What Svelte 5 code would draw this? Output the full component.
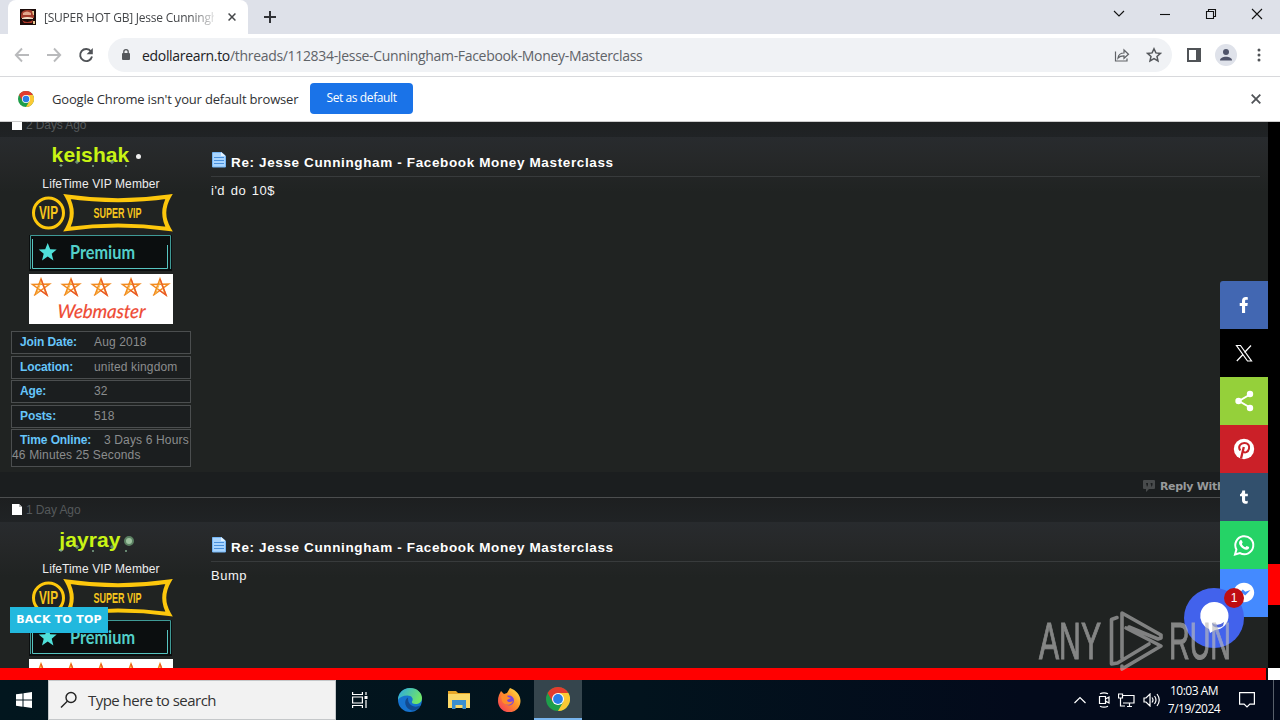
<script lang="ts">
  // Forum thread inside a browser window, with the desktop taskbar below

  const threadTitle = 'Re: Jesse Cunningham - Facebook Money Masterclass';

  let posts = $state([
    {
      date: '2 Days Ago',
      user: 'keishak',
      online: false,
      text: "i'd do 10$",
      stats: [
        { label: 'Join Date:', value: 'Aug 2018' },
        { label: 'Location:', value: 'united kingdom' },
        { label: 'Age:', value: '32' },
        { label: 'Posts:', value: '518' },
        { label: 'Time Online:', value: '3 Days 6 Hours 46 Minutes 25 Seconds', long: true }
      ]
    },
    { date: '1 Day Ago', user: 'jayray', online: true, text: 'Bump', stats: [] }
  ]);

  const shares = ['facebook', 'x', 'sharethis', 'pinterest', 'tumblr', 'whatsapp', 'messenger'];
  const starOffsets = [3, 33, 63, 93, 122];
</script>

{#snippet chromeLogo(size: number)}
  <svg width={size} height={size} viewBox="0 0 24 24">
    <circle cx="12" cy="12" r="12" fill="#1e9e4a" />
    <path d="M12 6H22.400A12 12 0 0 1 12 24L17.200 15Z" fill="#fcc934" />
    <path d="M1.600 6A12 12 0 0 1 22.400 6H12L6.800 15Z" fill="#e33b2e" />
    <circle cx="12" cy="12" r="6" fill="#fff" />
    <circle cx="12" cy="12" r="4.900" fill="#2a7de8" />
  </svg>
{/snippet}

{#snippet cross(size: number, stroke: number)}
  <svg width={size} height={size} viewBox="0 0 10 10" fill="none" stroke="currentColor" stroke-width={stroke}>
    <path d="M.7.7 9.3 9.3M9.3.7.7 9.3" />
  </svg>
{/snippet}

{#snippet badges()}
  <svg class="badges" width="144" height="130" viewBox="0 0 144 130">
    <g fill="none" stroke="#fdc70c">
      <circle cx="19.5" cy="19" r="15" stroke-width="3" />
      <path d="M38 2.500Q89 10 140 2.500 130.500 19 140 35 89 28 38 35 47.500 19 38 2.500Z" stroke-width="4" />
    </g>
    <g fill="#f6c61d" font-family="'Liberation Sans', sans-serif" font-weight="700">
      <text x="10" y="25" font-size="17.500" textLength="19" lengthAdjust="spacingAndGlyphs">VIP</text>
      <text x="64.500" y="23.500" font-size="14.500" textLength="48" lengthAdjust="spacingAndGlyphs">SUPER VIP</text>
    </g>
    <rect x="0" y="41" width="143" height="36" fill="#0b0e0f" />
    <path d="M1.500 75V41.500H141.500V75" fill="none" stroke="#3f9a96" />
    <path d="M3.500 45V74.500H138.500V51" fill="none" stroke="#57c4c0" />
    <path d="m18.700 49 2.500 6.200 6.500.3-5 4.200 1.700 6.800-5.700-3.900-5.700 3.900 1.700-6.800-5-4.200 6.500-.3Z" fill="#4fe0da" />
    <text x="41" y="64.500" font-size="19" font-family="Lato, sans-serif" font-weight="700" fill="#53cfc9" textLength="65" lengthAdjust="spacingAndGlyphs">Premium</text>
    <rect y="80" width="144" height="50" fill="#fff" />
    {#each starOffsets as x}
      <g transform="translate({x} 84)" fill="none" stroke="#f28a1e" stroke-width="1.500">
        <path d="M3 17 9 1 15 17 .5 6.500 17.500 6 2 17.500" />
        <path d="M4.500 16 9.500 3 13.500 15.500" stroke="#f6b23c" stroke-width="1" />
        <path d="M9 1 15 17 8 12" stroke="#e9562a" stroke-width="1.200" />
      </g>
    {/each}
    <g transform="translate(28 124) skewX(-4)">
      <text font-size="19" font-family="Lato, sans-serif" font-style="italic" fill="#ee4a33" stroke="#ee4a33" stroke-width=".2" textLength="88" lengthAdjust="spacingAndGlyphs">Webmaster</text>
    </g>
  </svg>
{/snippet}

{#snippet shareIcon(name: string)}
  <svg width="24" height="24" viewBox="0 0 24 24" fill="#fff">
    {#if name === 'facebook'}
      <path d="M10 20v-7H7.700v-3H10V8c0-2.700 1.400-4 3.800-4 .9 0 1.600.1 2 .2v2.600h-1.400c-1 0-1.300.5-1.300 1.400V10h2.700l-.4 3h-2.300v7Z" />
    {:else if name === 'x'}
      <path d="M4.500 4.500h4l11 15.500h-4ZM19 4.500l-6.500 7M11 13.500 4.800 20" fill="none" stroke="#fff" stroke-width="1.200" />
    {:else if name === 'sharethis'}
      <path d="m18 5.500-11 6.500 11 6.500" fill="none" stroke="#fff" stroke-width="2" />
      <circle cx="18" cy="5" r="3.200" /><circle cx="6.500" cy="12" r="3.200" /><circle cx="18" cy="19" r="3.200" />
    {:else if name === 'pinterest'}
      <circle cx="12" cy="12" r="10.200" />
      <path d="M9 21.500 11.800 10" fill="none" stroke="#c92228" stroke-width="2.300" />
      <path d="M8.300 13.500C5.500 9.500 8.500 6 12.300 6c3.700 0 5.500 2.500 4.700 5.800-.7 3.300-4.300 4.700-6.100 2.500" fill="none" stroke="#c92228" stroke-width="2" />
    {:else if name === 'tumblr'}
      <path d="M10.300 5.500h2.800v3.200h2.700v2.500h-2.700V15c0 1.300 1.100 1.500 2.600.8v2.400c-3.100 1.200-5.700.3-5.700-2.900v-4.100H8V9.200c1.500-.6 2.200-1.800 2.300-3.700Z" />
    {:else if name === 'whatsapp'}
      <path d="m3 21.500 1.400-5A9 9 0 1 1 8 20.100Z" fill="none" stroke="#fff" stroke-width="2" />
      <path d="M8.300 7.300c.6-.6 1.200-.5 1.500.2l.8 1.800c.2.500-.4 1.200-.8 1.600.8 1.500 1.900 2.600 3.600 3.300l1.200-1.300 2.500 1.200c.3 1.500-1.300 2.900-2.800 2.700-3.700-.5-7.700-4.400-7.200-7.500.1-.8.600-1.500 1.200-2Z" />
    {:else}
      <path d="M12 1.800c5.800 0 10.200 4.300 10.200 9.700 0 5.500-4.400 9.700-10.200 9.700-1.100 0-2-.1-3-.4L5.500 22v-3C3 17.100 1.800 14.500 1.800 11.500c0-5.400 4.400-9.700 10.200-9.700Z" />
      <path d="m5.500 14 5.300-5.500 2.500 2.300L18.500 9l-5.300 5.500-2.500-2.300Z" fill="#448aff" />
    {/if}
  </svg>
{/snippet}

<div class="screen">
  <header class="tabstrip">
    <div class="tab">
      <svg width="16" height="16" viewBox="0 0 16 16">
        <rect width="16" height="16" fill="#1c0c0a" />
        <path d="M1 6Q1 1 8 1t6 5v3H1Z" fill="#a33b2b" />
        <path d="M3 4q4-3 8 0v2H3Z" fill="#e2a68b" />
        <path d="M2 9q5-2 11 0v1H2Z" fill="#f1ddc5" />
        <path d="M2 11q5 4 11 0l-1 3H4Z" fill="#b23a2b" />
        <path d="M12 2h2v4h-1Zm1 10h2v3h-2Z" fill="#e5c48d" />
      </svg>
      <span class="tab-title">[SUPER HOT GB] Jesse Cunningham</span>
      <span class="tab-close">{@render cross(8, 1.9)}</span>
    </div>
    <svg class="new-tab" width="12" height="12" viewBox="0 0 12 12"><path d="M6 0v12M0 6h12" stroke="#303236" stroke-width="2" /></svg>
    <div class="window-buttons">
      <svg width="12" height="12" viewBox="0 0 12 12"><path d="m1 3 5 5 5-5" /></svg>
      <svg width="12" height="12" viewBox="0 0 12 12"><path d="M1 6.500h10" /></svg>
      <svg width="12" height="12" viewBox="0 0 12 12"><path d="M1.500 3.500h7v7h-7ZM3.500 3V1.500h7v7H9" /></svg>
      <svg width="12" height="12" viewBox="0 0 12 12"><path d="m1 1 10 10M11 1 1 11" /></svg>
    </div>
  </header>

  <div class="toolbar">
    <svg class="nav" width="16" height="16" viewBox="0 0 16 16"><path d="M15 8H2M8 1.500 1.800 8 8 14.500" stroke="#b9babc" /></svg>
    <svg class="nav" width="16" height="16" viewBox="0 0 16 16"><path d="M1 8h13M8 1.500 14.200 8 8 14.500" stroke="#b9babc" /></svg>
    <svg class="nav" width="16" height="16" viewBox="0 0 16 16"><path d="M13 4.500A6 6 0 1 0 14 9.500" stroke="#505357" /><path d="M14.800 1v6.200H8.600Z" fill="#505357" /></svg>
    <div class="omnibox">
      <svg width="10" height="14" viewBox="0 0 10 14"><rect x="1" y="5" width="8" height="7" rx="1" fill="#55585c" /><path d="M2.800 5.500V3.800a2.200 2.200 0 0 1 4.400 0v1.700" fill="none" stroke="#55585c" stroke-width="1.300" /></svg>
      <span class="url"><b>edollarearn.to</b>/threads/112834-Jesse-Cunningham-Facebook-Money-Masterclass</span>
      <svg class="share" width="16" height="16" viewBox="0 0 16 16"><path d="M1.500 4.500v9.500h11.500v-2.500M4 11c.5-3.500 2.500-5 6-5V3l4.500 4.300L10 11.300V8.800C7.500 8.800 5.500 9.300 4 11Z" fill="none" stroke="#606367" stroke-width="1.200" /></svg>
      <svg width="16" height="16" viewBox="0 0 16 16"><path d="m8 1.800 1.900 4.100 4.500.5-3.400 3 1 4.500-4-2.300-4 2.300 1-4.500-3.400-3 4.500-.5Z" fill="none" stroke="#55585c" stroke-width="1.500" /></svg>
    </div>
    <svg class="panel" width="14" height="14" viewBox="0 0 14 14"><path d="M0 0h14v14H0Zm2 2v10h7V2Z" fill="#505357" fill-rule="evenodd" /></svg>
    <svg class="avatar" width="22" height="22" viewBox="0 0 22 22"><circle cx="11" cy="11" r="11" fill="#dfe2ea" /><circle cx="11" cy="8" r="3" fill="#50546a" /><path d="M5 16.500c0-5 12-5 12 0Z" fill="#50546a" /></svg>
    <svg width="4" height="14" viewBox="0 0 4 14" fill="#505357"><circle cx="2" cy="2" r="1.500" /><circle cx="2" cy="7" r="1.500" /><circle cx="2" cy="12" r="1.500" /></svg>
  </div>

  <div class="infobar">
    {@render chromeLogo(16)}
    <span class="infobar-text">Google Chrome isn't your default browser</span>
    <button class="default-button">Set as default</button>
    <span class="infobar-close">{@render cross(10, 1.8)}</span>
  </div>

  <main class="page">
    <div class="thread">
      {#each posts as post}
        <article class="post">
          <div class="post-head">
            <svg width="10" height="12" viewBox="0 0 10 12"><path d="M0 0h7l3 3v8H0Z" fill="#fff" /><path d="M7 0v3h3" fill="#b9b9b9" /></svg>
            {post.date}
          </div>
          <div class="post-body">
            <aside class="user">
              <div class="username">
                <span class="name">{post.user}</span>
                <span class="status" class:online={post.online}></span>
                <svg class="sparkles" width="78" height="8" viewBox="0 0 78 8" stroke="#7fa88a" stroke-width="1"><path d="M8 4v3M6.500 5.500h3M24 0v4M22 2h4M40 5v2M39 6h2M59 0v4M57 2h4M73 5v2M72 6h2" /></svg>
              </div>
              <div class="rank">LifeTime VIP Member</div>
              {@render badges()}
              <div class="stats">
                {#each post.stats as stat}
                  <div class="stat" class:long={stat.long}><b>{stat.label}</b>{stat.value}</div>
                {/each}
              </div>
            </aside>
            <section class="message">
              <h2>
                <svg width="16" height="18" viewBox="0 0 16 18"><path d="M1.500 1.500h9l4 3.500v11h-13Z" fill="#a9d5ff" stroke="#75b6f5" /><path d="M3 6.500h10M3 9.500h10M3 12.500h10" stroke="#4a90dc" /><path d="M10 1v4h4.500" fill="#e4f3ff" /></svg>
                {threadTitle}
              </h2>
              <p>{post.text}</p>
            </section>
          </div>
          <div class="post-foot">
            <svg width="14" height="14" viewBox="0 0 14 14"><path d="M2 1h10q1 0 1 1v7q0 1-1 1H7l-3 3v-3H2q-1 0-1-1V2q0-1 1-1Z" fill="#484b4c" /><path d="M4 4h2v2L5 8M8.500 4h2v2l-1 2" fill="#1b1e1f" /></svg>
            Reply With Quote
          </div>
        </article>
      {/each}
    </div>
    <div class="scroll-y"><i></i></div>
    <div class="scroll-x"></div>

    <div class="back-top">BACK TO TOP</div>
    <div class="share-bar">
      {#each shares as name}
        <div class="share-item {name}">{@render shareIcon(name)}</div>
      {/each}
    </div>
    <div class="chat">
      <svg width="32" height="34" viewBox="0 0 32 34"><path d="M16 1a14 14 0 0 1 1 28l-5 3-1-4A14 14 0 0 1 16 1Z" fill="#fff" /><path d="M14 22q6 4 12-1l-1 4q-5 3-10 0Z" fill="#4b63dd" /></svg>
      <span class="chat-count">1</span>
    </div>
    <svg class="watermark" width="196" height="64" viewBox="0 0 196 64">
      <g fill="#bbb" stroke="#bbb" stroke-width="1.100" font-family="'Liberation Sans Narrow', 'Liberation Sans', sans-serif" font-size="51">
        <text x="1" y="50" textLength="62" lengthAdjust="spacingAndGlyphs">ANY</text>
        <text x="131" y="50" textLength="62" lengthAdjust="spacingAndGlyphs">RUN</text>
      </g>
      <g fill="none" stroke="#b4b4b4" stroke-width="3.600" stroke-linejoin="round" stroke-linecap="round">
        <path d="M79 8.500 73.500 10.500v44.500l6-1L111 35M84 49V4l39 22M88 19l35 18-39 23V57M123 26v3l-3 1-29-12" />
      </g>
    </svg>
  </main>

  <footer class="taskbar">
    <div class="start">
      <svg width="16" height="16" viewBox="0 0 16 16" fill="#fff"><path d="M0 2.300 6.500 1.400v6.100H0ZM7.500 1.200 16 0v7.500H7.500ZM0 8.500h6.500v6.200L0 13.800ZM7.500 8.500H16V16l-8.500-1.200Z" /></svg>
    </div>
    <div class="search">
      <svg width="18" height="18" viewBox="0 0 18 18" fill="none" stroke="#222" stroke-width="1.400"><circle cx="11" cy="6.500" r="5" /><path d="M7.300 10.200 1 16.500" /></svg>
      Type here to search
    </div>
    <div class="task">
      <svg width="16" height="16" viewBox="0 0 16 16" fill="none" stroke="#fff" stroke-width="1.200"><path d="M.6 0v2.500H10.400V0M.6 16v-2.500H10.400V16M.6 5h9.800v6H.6ZM14 0v3M14 8v8" /><path d="M12.500 4h3v3h-3Z" fill="#fff" stroke="none" /></svg>
    </div>
    <div class="task">
      <svg width="24" height="24" viewBox="0 0 24 24">
        <defs>
          <linearGradient id="edge-top" x1="0" y1="0" x2="1" y2=".4"><stop offset="0" stop-color="#2aa7e5" /><stop offset="1" stop-color="#6fe56a" /></linearGradient>
        </defs>
        <circle cx="12" cy="12" r="12" fill="#1673cf" />
        <path d="M0 12C0 5 5 0 12 0c7.500 0 12 5 12 10 0 4-3 6-6.500 6-3 0-4-1-3.500-2.500 2-3-.5-6-4.500-6C5 7.500 1.500 9 0 12Z" fill="url(#edge-top)" />
        <path d="M10 9.500C5 12 7 21 14 22.500c4 0 7-2 8.500-5-6 3-13 0-12.500-8Z" fill="#124b91" />
      </svg>
    </div>
    <div class="task">
      <svg width="22" height="20" viewBox="0 0 22 20"><path d="M0 1h8l2 2h12v15H0Z" fill="#e8a728" /><path d="M0 4h22v14H0Z" fill="#fbd868" /><path d="M4 10h14v9h-3.500v-4h-7v4H4Z" fill="#3b8fd0" /></svg>
    </div>
    <div class="task">
      <svg width="24" height="24" viewBox="0 0 24 24">
        <defs>
          <linearGradient id="fox" x1="1" y1="0" x2="0" y2="1"><stop offset="0" stop-color="#fff04d" /><stop offset=".45" stop-color="#ff9128" /><stop offset="1" stop-color="#f5305f" /></linearGradient>
        </defs>
        <path d="M2 7 4 3l3 3 3-1 3-5c6 2 10.500 7 10.500 13A11 11 0 0 1 1 13c0-2 .2-4 1-6Z" fill="url(#fox)" />
        <circle cx="12" cy="12.500" r="5" fill="#7a46db" />
        <path d="M4 8c3-2 6-1 7 1l3 1-4 2c0 2 3 3 6 1-1 5-9 5-11 0Z" fill="#ff8a2a" />
      </svg>
    </div>
    <div class="task active">{@render chromeLogo(24)}</div>
    <div class="tray">
      <svg width="12" height="8" viewBox="0 0 12 8"><path d="m.5 7 5.500-5.500L11.500 7" /></svg>
      <svg width="12" height="16" viewBox="0 0 12 16"><path d="M1.500 4.500h6v7h-6ZM7.500 7 11 5v6L7.500 9M2 1.800q4-2 8 0M2 14.200q4 2 8 0" /></svg>
      <svg width="17" height="14" viewBox="0 0 17 14"><path d="M5 2.500h11v7.500H5M9 13.500h5M11.500 10v3M.5 1h4v4h-4ZM2.500 5v8H7" /></svg>
      <svg width="17" height="14" viewBox="0 0 17 14"><path d="M1 5h2l4-4v12L3 9H1ZM9 4.500q2 2.500 0 5M11.500 3q3 4 0 8M14 1q4.500 6 0 12" /></svg>
    </div>
    <div class="clock"><span>10:03 AM</span><span>7/19/2024</span></div>
    <svg class="notice" width="16" height="16" viewBox="0 0 16 16"><path d="M.6.6h14.800v11.500h-4.500L8 15l-2.900-2.900H.6Z" fill="none" stroke="#fff" stroke-width="1.200" /></svg>
    <i class="desktop-edge"></i>
  </footer>
</div>

<style>
  :global(body) {
    margin: 0;
    overflow: hidden;
  }

  .screen {
    width: 1280px;
    height: 720px;
    display: flex;
    flex-direction: column;
    overflow: hidden;
    font-family: 'Liberation Sans', sans-serif;
    white-space: nowrap;
  }

  svg {
    flex: none;
    display: block;
  }

  .screen > * {
    box-sizing: border-box;
    flex: none;
  }

  /* Browser chrome */
  .tabstrip {
    height: 34px;
    display: flex;
    align-items: center;
    padding-left: 8px;
    background: #dee1e9;
    font-family: 'Open Sans', 'Noto Sans', sans-serif;
  }

  .tab {
    box-sizing: border-box;
    width: 240px;
    height: 34px;
    padding: 0 12px;
    display: flex;
    align-items: center;
    background: #fff;
    border-radius: 8px 8px 0 0;
  }

  .tab-title {
    width: 170px;
    margin-left: 8px;
    overflow: hidden;
    color: #45474a;
    font-size: 12px;
    letter-spacing: -0.22px;
    mask-image: linear-gradient(90deg, #000 145px, transparent 175px);
  }

  .tab-close {
    margin-left: 14px;
    color: #45474a;
  }

  .new-tab {
    margin-left: 16px;
  }

  .window-buttons {
    display: flex;
    gap: 34px;
    margin-left: auto;
    margin-top: -6px;
    padding-right: 17px;
    fill: none;
    stroke: #111;
    stroke-width: 1.1;
  }

  .toolbar {
    height: 43px;
    display: flex;
    align-items: center;
    padding: 0 19px 0 14px;
    border-bottom: 1px solid #d8d9dc;
    background: #fff;
    font-family: 'Open Sans', 'Noto Sans', sans-serif;
  }

  .nav {
    margin-right: 16px;
    fill: none;
    stroke-width: 1.9;
  }

  .omnibox {
    box-sizing: border-box;
    width: 1064px;
    height: 34px;
    margin-left: -2px;
    padding: 0 10px 0 13px;
    display: flex;
    align-items: center;
    border-radius: 17px;
    background: #f0f2f5;
  }

  .url {
    margin-left: 11px;
    color: #5f6368;
    font-size: 14px;
    letter-spacing: -0.32px;
  }

  .url b {
    color: #202124;
    font-weight: 400;
  }

  .share {
    margin-left: auto;
    margin-right: 16px;
  }

  .panel {
    margin-left: 15px;
  }

  .avatar {
    margin: 0 auto 0 14px;
  }

  .infobar {
    height: 45px;
    display: flex;
    align-items: center;
    padding: 0 19px 0 18px;
    border-bottom: 1px solid #ccc;
    background: #fff;
    color: #303134;
    font-family: 'Open Sans', 'Noto Sans', sans-serif;
    font-size: 13px;
  }

  .infobar-text {
    width: 246px;
    margin-left: 18px;
    letter-spacing: -0.18px;
  }

  .default-button {
    width: 103px;
    height: 31px;
    margin: -1px 0 0 12px;
    padding: 0 0 2px;
    border: 0;
    border-radius: 4px;
    background: #1a73e8;
    color: #fff;
    font: 12px 'Open Sans', sans-serif;
    letter-spacing: -0.4px;
  }

  .infobar-close {
    margin-left: auto;
    color: #505357;
  }

  /* Forum page */
  .page {
    position: relative;
    height: 558px;
    display: grid;
    grid-template: 546px 12px / 1268px 12px;
    overflow: hidden;
    background: #fff;
  }

  .thread {
    height: 546px;
    overflow: hidden;
    background: #1b1e1f;
  }

  .post {
    height: 385px;
    box-sizing: border-box;
    border-top: 1px solid #4c4e4f;
  }

  .post:first-child {
    margin-top: -10px;
  }

  .post-head {
    height: 24px;
    display: flex;
    align-items: center;
    gap: 4px;
    padding-left: 12px;
    background: linear-gradient(#1d1f20, #202325);
    color: #55595b;
    font-size: 12px;
    letter-spacing: -0.1px;
  }

  .post-body {
    height: 335px;
    display: flex;
    background: linear-gradient(#282b2e, #262829 22px, #202322 55px);
  }

  .user {
    width: 180px;
    padding: 6px 10px 0 11px;
    border-left: 1px solid #181a1b;
    margin-left: -1px;
    color: #ededed;
  }

  .username {
    position: relative;
    height: 24px;
    display: flex;
    align-items: center;
    justify-content: center;
    gap: 7px;
    margin: 0 9px 0 0;
  }

  .name {
    color: #c9f414;
    font-size: 21px;
    font-weight: 700;
    letter-spacing: 0.1px;
  }

  .status {
    width: 5px;
    height: 5px;
    margin-top: 2px;
    border-radius: 50%;
    background: #eee;
  }

  .status.online {
    width: 6px;
    height: 6px;
    margin-left: -4px;
    border: 2px solid #5b8062;
    background: #9ec3a0;
  }

  .sparkles {
    position: absolute;
    left: 42px;
    bottom: -1px;
  }

  .rank {
    height: 15px;
    margin-top: 10px;
    line-height: 15px;
    text-align: center;
    font-size: 12px;
    letter-spacing: 0.1px;
  }

  .badges {
    margin: 2px 0 7px 18px;
  }

  .stat {
    box-sizing: border-box;
    height: 23px;
    margin-bottom: 1.6px;
    padding-left: 8px;
    border: 1px solid #4b4e4f;
    background: #1b1e1f;
    color: #8b8d8e;
    font-size: 12px;
    line-height: 20px;
    letter-spacing: 0.15px;
  }

  .stat b {
    display: inline-block;
    width: 74px;
    color: #66c5fa;
    letter-spacing: -0.1px;
  }

  .stat.long {
    height: 38px;
    padding: 3px 0 0;
    line-height: 15px;
    white-space: normal;
  }

  .stat.long b {
    width: 84px;
    padding-left: 8px;
  }

  .message {
    width: 1049px;
    padding-left: 10px;
    color: #f5f5f5;
  }

  .message h2 {
    box-sizing: border-box;
    height: 40px;
    margin: 0;
    padding-top: 14px;
    display: flex;
    gap: 4px;
    border-bottom: 1px solid #383b3c;
    color: #fff;
    font-size: 13.5px;
    line-height: 24px;
    letter-spacing: 0.63px;
  }

  .message p {
    margin: 5px 0;
    font-size: 13px;
    line-height: 18px;
    letter-spacing: 0.5px;
    word-spacing: 1.5px;
  }

  .post-foot {
    height: 25px;
    padding-top: 3px;
    box-sizing: border-box;
    display: flex;
    align-items: center;
    justify-content: flex-end;
    gap: 4px;
    padding-right: 4px;
    color: #989a9b;
    font: 700 11px 'DejaVu Sans', sans-serif;
    letter-spacing: -0.3px;
  }

  .scroll-y {
    padding-top: 442px;
    height: 104px;
    background: #000;
  }

  .scroll-y i {
    display: block;
    height: 41px;
    background: #f00;
  }

  .scroll-x {
    width: 1266px;
    height: 12px;
    border-right: 2px solid #111;
    background: #f00;
  }

  .back-top {
    position: absolute;
    left: 10px;
    top: 485px;
    box-sizing: border-box;
    width: 98px;
    height: 26px;
    background: #22b8de;
    color: #fff;
    font: 700 11px/26px 'DejaVu Sans', sans-serif;
    text-align: center;
    letter-spacing: 0.25px;
  }

  .share-bar {
    position: absolute;
    left: 1220px;
    top: 159px;
    width: 48px;
    overflow: hidden;
    border-radius: 3px 0 0 3px;
  }

  .share-item {
    height: 48px;
    display: grid;
    place-items: center;
  }

  .facebook { background: #4267b2; }
  .x { background: #000; }
  .sharethis { background: #95d03a; }
  .pinterest { background: #cb2028; }
  .tumblr { background: #32506d; }
  .whatsapp { background: #25d366; }
  .messenger { background: #448aff; }

  .chat {
    position: absolute;
    left: 1184px;
    top: 466px;
    width: 60px;
    height: 60px;
    display: grid;
    place-items: center;
    border-radius: 50%;
    background: #4262ec;
  }

  .chat-count {
    position: absolute;
    left: 40px;
    top: 0;
    width: 20px;
    height: 20px;
    border-radius: 50%;
    background: #c00d12;
    color: #fff;
    font-size: 12px;
    line-height: 20px;
    text-align: center;
  }

  .watermark {
    position: absolute;
    left: 1038px;
    top: 487px;
    opacity: 0.65;
  }

  /* Desktop taskbar */
  .taskbar {
    height: 40px;
    display: flex;
    align-items: center;
    background: linear-gradient(90deg, #02161e, #02131d 50%, #030a1b 80%);
    color: #fff;
    font-family: 'Open Sans', 'Noto Sans', sans-serif;
  }

  .start,
  .task {
    box-sizing: border-box;
    width: 48px;
    height: 40px;
    display: grid;
    place-items: center;
  }

  .search {
    box-sizing: border-box;
    width: 288px;
    height: 40px;
    padding-left: 11px;
    display: flex;
    align-items: center;
    gap: 10px;
    border: 1px solid #c5c8ca;
    background: #f2f2f2;
    color: #333;
    font-size: 15px;
    letter-spacing: -0.53px;
  }

  .task {
    margin-right: 1.5px;
  }

  .task.active {
    margin: 0;
    border-bottom: 2px solid #78b5ee;
    background: #35454d;
  }

  .tray {
    display: flex;
    align-items: center;
    gap: 11px;
    margin-left: auto;
    fill: none;
    stroke: #fff;
    stroke-width: 1.2;
  }

  .tray svg + svg + svg {
    margin-left: -3px;
  }

  .tray svg:first-child {
    margin-right: 1px;
  }

  .clock {
    width: 68px;
    display: grid;
    text-align: center;
    font-size: 12px;
    line-height: 18px;
    letter-spacing: -0.5px;
  }

  .notice {
    margin: 0 18px 0 11px;
  }

  .desktop-edge {
    width: 6px;
    height: 40px;
    border-left: 1px solid #58606b;
  }
</style>
